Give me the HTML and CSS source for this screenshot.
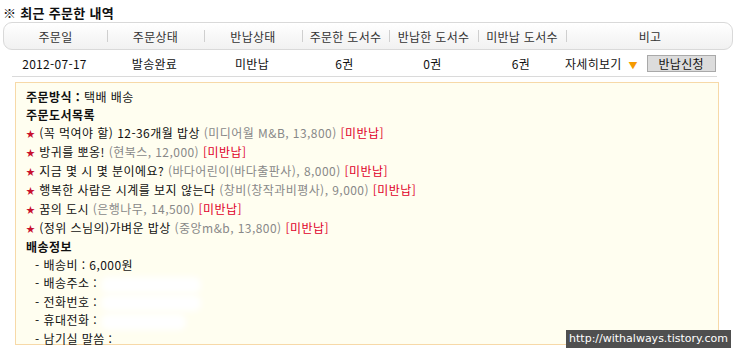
FILE: index.html
```html
<!DOCTYPE html>
<html lang="ko">
<head>
    <meta charset="UTF-8">
    <title>최근 주문한 내역</title>
    <link rel="stylesheet" href="styles.css">
</head>
<body>
    <div class="page">
        <h2 class="title">※ 최근 주문한 내역</h2>

        <div class="cols head">
            <div class="cell first">주문일</div>
            <div class="cell">주문상태</div>
            <div class="cell">반납상태</div>
            <div class="cell">주문한 도서수</div>
            <div class="cell">반납한 도서수</div>
            <div class="cell">미반납 도서수</div>
            <div class="cell">비고</div>
        </div>

        <div class="cols row">
            <div class="cell">2012-07-17</div>
            <div class="cell">발송완료</div>
            <div class="cell">미반납</div>
            <div class="cell">6권</div>
            <div class="cell">0권</div>
            <div class="cell">6권</div>
            <div class="cell etc">
                <span class="more">자세히보기 <span class="arrow">▼</span></span>
                <button class="btn">반납신청</button>
            </div>
        </div>
        <div class="rule"></div>

        <div class="detail">
            <p class="line"><b>주문방식 :</b> 택배 배송</p>
            <p class="line"><b>주문도서목록</b></p>
            <ul class="books">
                <li><span class="star">★</span> (꼭 먹여야 할) 12-36개월 밥상 <span class="pub">(미디어월 M&amp;B, 13,800)</span> <span class="due">[미반납]</span></li>
                <li><span class="star">★</span> 방귀를 뽀옹! <span class="pub">(현북스, 12,000)</span> <span class="due">[미반납]</span></li>
                <li><span class="star">★</span> 지금 몇 시 몇 분이에요? <span class="pub">(바다어린이(바다출판사), 8,000)</span> <span class="due">[미반납]</span></li>
                <li><span class="star">★</span> 행복한 사람은 시계를 보지 않는다 <span class="pub">(창비(창작과비평사), 9,000)</span> <span class="due">[미반납]</span></li>
                <li><span class="star">★</span> 꿈의 도시 <span class="pub">(은행나무, 14,500)</span> <span class="due">[미반납]</span></li>
                <li><span class="star">★</span> (정위 스님의)가벼운 밥상 <span class="pub">(중앙m&amp;b, 13,800)</span> <span class="due">[미반납]</span></li>
            </ul>
            <p class="line"><b>배송정보</b></p>
            <ul class="ship">
                <li>- 배송비 : 6,000원</li>
                <li>- 배송주소 : <span class="hide"></span></li>
                <li>- 전화번호 : <span class="hide"></span></li>
                <li>- 휴대전화 : <span class="hide short"></span></li>
                <li>- 남기실 말씀 :</li>
            </ul>
        </div>
    </div>

    <div class="mark">http://withalways.tistory.com</div>
</body>
</html>
```

FILE: styles.css
```css
body {
    margin: 0;
    padding: 0;
    background-color: #fff;
    font-family: "Noto Sans CJK KR", "Liberation Sans", sans-serif;
    font-size: 12px;
    letter-spacing: 0.3px;
    color: #111;
}

.page {
    width: 730px;
    padding: 4px 0 0 3px;
}

.title {
    margin: 0;
    font-size: 13px;
    line-height: 18px;
    font-weight: bold;
    color: #111;
}

.cols {
    display: grid;
    grid-template-columns: 103px 97px 98px 87px 89px 88px 168px;
}

.cell {
    display: flex;
    align-items: center;
    justify-content: center;
}

.head {
    box-sizing: border-box;
    height: 28px;
    border: 1px solid #d9d9d9;
    border-radius: 9px;
    background: linear-gradient(#ffffff, #f1f1f1);
    color: #333;
}

.head .cell {
    background: linear-gradient(#cfcfcf, #cfcfcf) no-repeat left center / 1px 12px;
}

.head .cell.first {
    background: none;
}

.row {
    height: 26px;
    color: #111;
}

.row .etc {
    justify-content: flex-start;
    gap: 9px;
}

.arrow {
    color: #f59a00;
    font-size: 9px;
    margin-left: 3px;
}

.btn {
    height: 17px;
    width: 69px;
    padding: 0;
    border: 1px solid #a9a9a9;
    background-color: #dcdcdc;
    font-family: inherit;
    font-size: 12px;
    letter-spacing: 0.3px;
    color: #111;
    line-height: 15px;
}

.rule {
    height: 1px;
    width: 705px;
    margin-left: 9px;
    background-color: #dadada;
}

.detail {
    box-sizing: border-box;
    width: 704px;
    height: 263px;
    margin: 5px 0 0 12px;
    padding: 5px 10px;
    border: 1px solid #f7d9a8;
    background-color: #fffef0;
    color: #111;
    line-height: 18px;
    letter-spacing: 0.45px;
}

.line {
    margin: 0;
}

.books, .ship {
    list-style: none;
    margin: 0;
    padding: 0;
}

.ship {
    padding-left: 9px;
}

.star {
    color: #c8102e;
    font-size: 9px;
    vertical-align: 1px;
}

.pub {
    color: #888;
}

.due {
    color: #e0002a;
}

.hide {
    display: inline-block;
    width: 100px;
    height: 16px;
    background-color: #fff;
    border-radius: 7px;
    filter: blur(3px);
    vertical-align: middle;
}

.hide.short {
    width: 85px;
}

.mark {
    position: absolute;
    left: 566px;
    top: 330px;
    width: 165px;
    height: 18px;
    background-color: #4f4f4f;
    color: #fff;
    font-family: "DejaVu Sans", sans-serif;
    font-size: 11px;
    letter-spacing: 0;
    line-height: 18px;
    text-align: center;
}
```
